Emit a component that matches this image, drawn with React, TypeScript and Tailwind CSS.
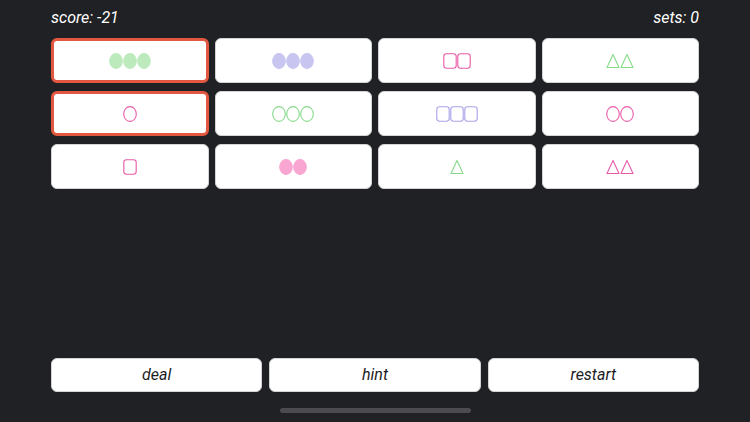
import React from "react";

type Shape = "oval" | "square" | "triangle";
type Fill = "solid" | "open";
type Color = "green" | "purple" | "pink";

type Card = { shape: Shape; fill: Fill; color: Color; count: number; selected?: boolean };

const palette: Record<Color, { fill: string; stroke: string }> = {
  green: { fill: "#bdeabd", stroke: "#86d98a" },
  purple: { fill: "#c8c5f0", stroke: "#a8a2e8" },
  pink: { fill: "#f9a6d2", stroke: "#e85aa6" },
};

const cards: Card[] = [
  { shape: "oval", fill: "solid", color: "green", count: 3, selected: true },
  { shape: "oval", fill: "solid", color: "purple", count: 3 },
  { shape: "square", fill: "open", color: "pink", count: 2 },
  { shape: "triangle", fill: "open", color: "green", count: 2 },
  { shape: "oval", fill: "open", color: "pink", count: 1, selected: true },
  { shape: "oval", fill: "open", color: "green", count: 3 },
  { shape: "square", fill: "open", color: "purple", count: 3 },
  { shape: "oval", fill: "open", color: "pink", count: 2 },
  { shape: "square", fill: "open", color: "pink", count: 1 },
  { shape: "oval", fill: "solid", color: "pink", count: 2 },
  { shape: "triangle", fill: "open", color: "green", count: 1 },
  { shape: "triangle", fill: "open", color: "pink", count: 2 },
];

function ShapeIcon({ shape, fill, color }: { shape: Shape; fill: Fill; color: Color }) {
  const c = palette[color];
  const paint = fill === "solid" ? { fill: c.fill, stroke: c.fill } : { fill: "none", stroke: c.stroke };
  return (
    <svg width="14" height="16" viewBox="0 0 14 16" className="block">
      {shape === "oval" && <ellipse cx="7" cy="8" rx="6.3" ry="7.4" strokeWidth="1.1" {...paint} />}
      {shape === "square" && <rect x="0.8" y="0.8" width="12.4" height="14.4" rx="2.6" strokeWidth="1.1" {...paint} />}
      {shape === "triangle" && (
        <polygon points="7,1.5 13,14.5 1,14.5" strokeWidth="1.1" strokeLinejoin="round" {...paint} />
      )}
    </svg>
  );
}

export default function App() {
  return (
    <main
      className="flex h-[422px] w-[750px] flex-col bg-[#202124] px-[51px] text-white"
      style={{ fontFamily: "Roboto, 'Noto Sans', sans-serif" }}
    >
      <div className="flex h-[36px] items-center justify-between text-[16px] italic">
        <span>score: -21</span>
        <span>sets: 0</span>
      </div>
      <div className="mt-[2px] grid grid-cols-4 gap-x-[6px] gap-y-[8px]">
        {cards.map((card, i) => (
          <div
            key={i}
            className={`flex h-[45px] items-center justify-center rounded-[6px] bg-white ${
              card.selected ? "border-[3px] border-[#e2573f]" : "border border-[#d4d4d6]"
            }`}
          >
            {Array.from({ length: card.count }).map((_, j) => (
              <ShapeIcon key={j} shape={card.shape} fill={card.fill} color={card.color} />
            ))}
          </div>
        ))}
      </div>
      <div className="flex-1" />
      <div className="grid grid-cols-3 gap-[7px]">
        {["deal", "hint", "restart"].map((label) => (
          <button
            key={label}
            type="button"
            className="h-[34px] rounded-[6px] border border-[#d4d4d6] bg-white text-[16px] italic text-[#1c1c1e]"
          >
            {label}
          </button>
        ))}
      </div>
      <div className="flex h-[30px] justify-center pt-[16px]">
        <div className="h-[5px] w-[191px] rounded-full bg-[#4b4b50]" />
      </div>
    </main>
  );
}
